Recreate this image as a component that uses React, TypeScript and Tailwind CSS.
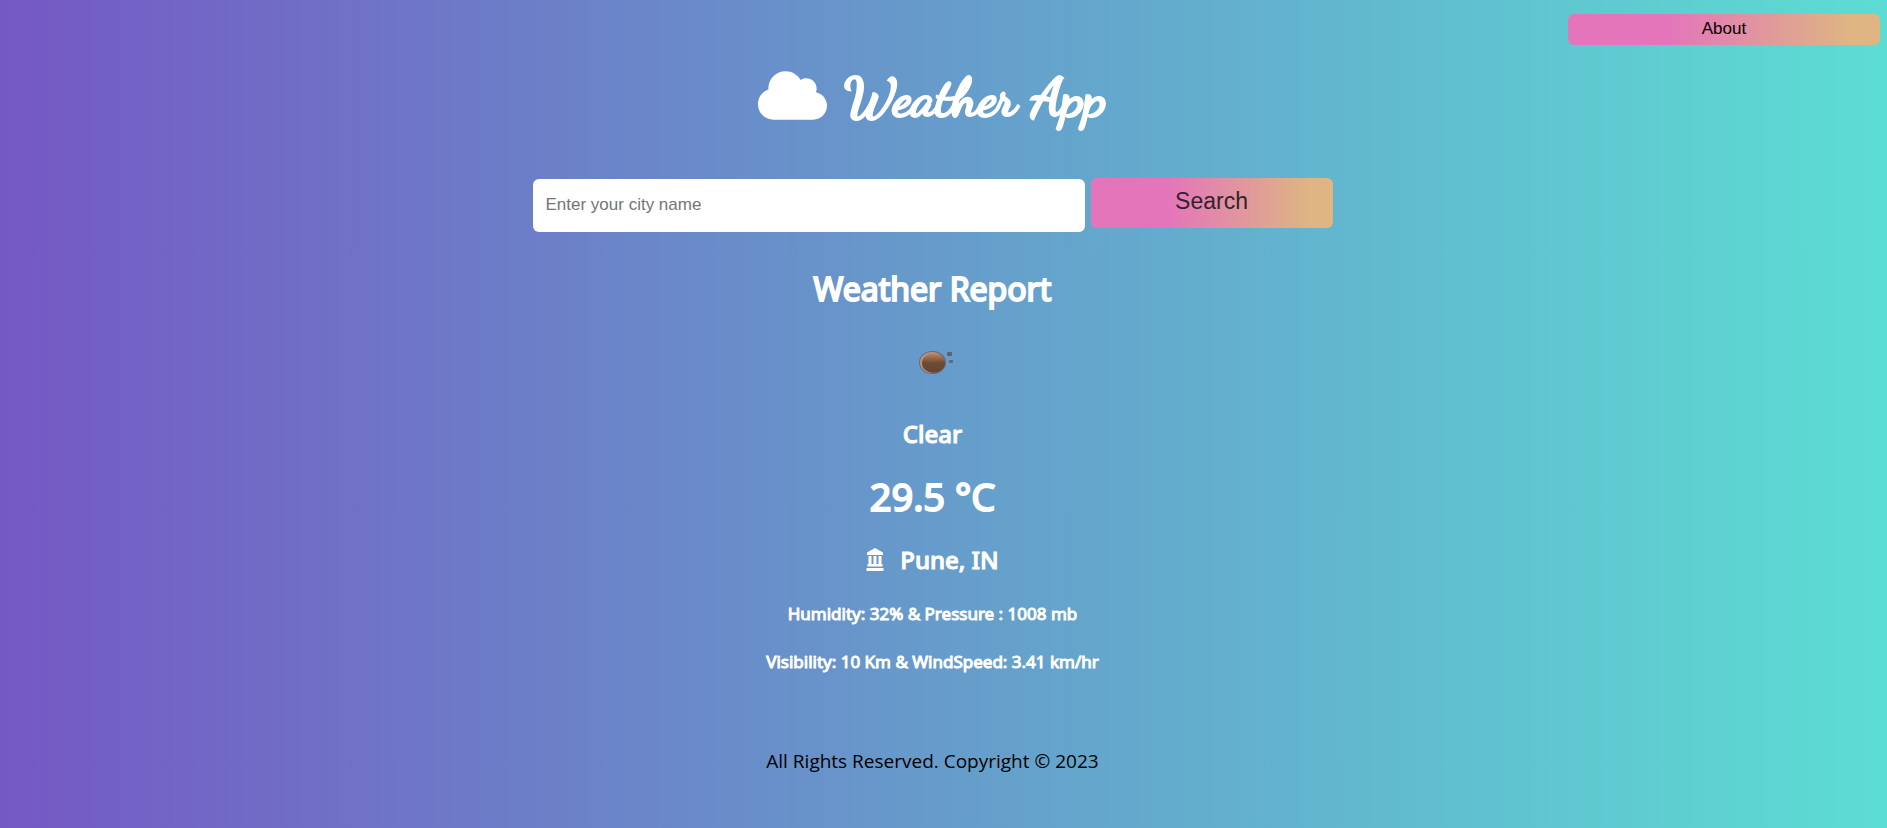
import { FaCloud } from "react-icons/fa";

const accent =
  "bg-[linear-gradient(90deg,#e475bb_0%,#e475bb_32%,#deb583_90%,#deb583_100%)]";

const heavy = "[-webkit-text-stroke:1px_white]";
const extraHeavy = "[-webkit-text-stroke:2px_white]";

function AcornIcon() {
  return (
    <svg className="h-6 w-10" viewBox="0 0 40 24" role="img" aria-label="Clear sky">
      <defs>
        <linearGradient id="shell" x1="0" y1="0" x2="0" y2="1">
          <stop offset="0" stopColor="#c08a66" />
          <stop offset="0.25" stopColor="#966a4a" />
          <stop offset="0.5" stopColor="#6f4a30" />
          <stop offset="1" stopColor="#5f4536" />
        </linearGradient>
      </defs>
      <ellipse cx="19.5" cy="12.5" rx="13.5" ry="11.5" fill="#6d6a78" />
      <ellipse cx="19" cy="12.5" rx="12" ry="10.5" fill="#b8937c" />
      <ellipse cx="20.5" cy="13" rx="11.5" ry="10" fill="url(#shell)" />
      <rect x="34" y="2" width="5" height="4" rx="1" fill="#5e5f70" />
      <rect x="36" y="10" width="4" height="3" rx="1" fill="#5e6680" />
    </svg>
  );
}

function LandmarkIcon() {
  return (
    <svg className="h-6 w-[18px]" viewBox="0 0 18 24" fill="currentColor" aria-hidden="true">
      <path d="M9 0 17 4.5V7H1V4.5Z" />
      <path d="M2.5 8H5.5V17H2.5ZM7.5 8H10.5V17H7.5ZM12.5 8H15.5V17H12.5Z" />
      <path d="M1.5 16H16.5V18.5H1.5ZM0.5 20H17.5V23H0.5Z" />
    </svg>
  );
}

export default function App() {
  return (
    <div className="flex min-h-screen flex-col bg-[linear-gradient(90deg,#7558c4_0%,#669ccb_50%,#5cddd3_100%)] font-['Noto_Sans',sans-serif] text-white">
      <header className="flex justify-end px-[7px] pt-[14px]">
        <button
          type="button"
          className={`h-[31px] w-[312px] rounded-md pb-[2px] font-['Liberation_Sans',sans-serif] text-[17px] text-black ${accent}`}
        >
          About
        </button>
      </header>

      <main className="flex flex-col items-center pr-[22px]">
        <h1 className="mt-3 flex h-[76px] items-center gap-3 font-['Dancing_Script',cursive] text-[54px]">
          <FaCloud className="size-[69px]" aria-hidden="true" />
          <span className={`pt-1 pl-1 font-bold ${extraHeavy}`}>Weather App</span>
        </h1>

        <form
          className="mt-[45px] flex w-[800px] max-w-full items-start gap-[6px] font-['Liberation_Sans',sans-serif]"
          onSubmit={(event) => event.preventDefault()}
        >
          <input
            type="text"
            aria-label="City name"
            placeholder="Enter your city name"
            className="mt-px h-[53px] min-w-0 flex-1 rounded-md bg-white px-[13px] pb-[2px] text-[17px] text-black placeholder:text-[#757575]"
          />
          <button
            type="submit"
            className={`h-[50px] w-[242px] rounded-md pb-[3px] text-[23px] text-[#33232e] ${accent}`}
          >
            Search
          </button>
        </form>

        <h2 className={`mt-[35px] text-[32px] leading-[44px] ${extraHeavy}`}>Weather Report</h2>
        <div className="mt-[39px]">
          <AcornIcon />
        </div>
        <p className={`mt-11 text-2xl leading-8 font-medium ${heavy}`}>Clear</p>
        <p className={`mt-[18px] text-[38px] leading-[56px] ${extraHeavy}`}>29.5 °C</p>
        <p className={`mt-[20px] flex items-center gap-4 text-2xl leading-8 font-medium ${heavy}`}>
          <LandmarkIcon />
          Pune, IN
        </p>
        <p className={`mt-[26px] text-[17px] leading-6 ${heavy}`}>Humidity: 32% &amp; Pressure : 1008 mb</p>
        <p className={`mt-[24px] text-[17px] leading-6 ${heavy}`}>Visibility: 10 Km &amp; WindSpeed: 3.41 km/hr</p>
      </main>

      <footer className="mt-[73px] pr-[22px] text-center font-['Open_Sans',sans-serif] text-[19px] leading-7 text-black">
        All Rights Reserved. Copyright © 2023
      </footer>
    </div>
  );
}
